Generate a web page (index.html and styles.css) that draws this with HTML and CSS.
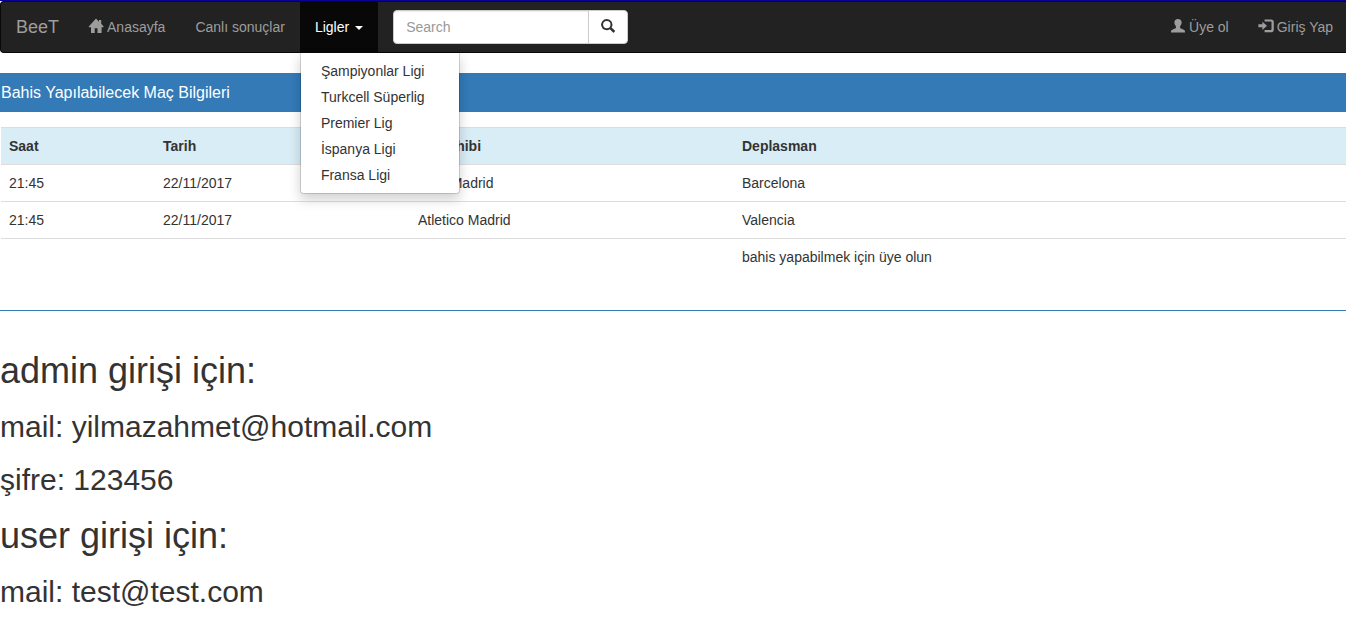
FILE: index.html
```html
<!DOCTYPE html>
<html lang="tr">
<head>
<meta charset="utf-8">
<title>BeeT</title>
<link rel="stylesheet" href="styles.css">
</head>
<body>
<nav class="navbar">
  <a class="brand" href="#">BeeT</a>
  <ul class="nav">
    <li><a class="nav-link" href="#"><svg class="icon" viewBox="0 0 14 14" aria-hidden="true"><path d="M7 -0.4 10 2.7V1H12.2V4.8L14.6 7.4V8.2H12.6V14H8.5V9.3H5.7V14H2V8.2H-.2V7.4Z"/></svg>Anasayfa</a></li>
    <li><a class="nav-link" href="#">Canlı sonuçlar</a></li>
    <li class="dropdown">
      <button class="nav-link dropdown-toggle" type="button" aria-expanded="true">Ligler<span class="caret"></span></button>
      <ul class="dropdown-menu">
        <li><a href="#">Şampiyonlar Ligi</a></li>
        <li><a href="#">Turkcell Süperlig</a></li>
        <li><a href="#">Premier Lig</a></li>
        <li><a href="#">İspanya Ligi</a></li>
        <li><a href="#">Fransa Ligi</a></li>
      </ul>
    </li>
  </ul>
  <form class="search">
    <input class="search-input" type="text" placeholder="Search" aria-label="Search">
    <button class="search-button" type="button" aria-label="Ara"><svg class="icon" viewBox="0 0 14 14" aria-hidden="true"><path fill-rule="evenodd" d="M5.8 0a5.6 5.6 0 0 1 4.8 8.5l3.2 3.1c.3.3.3.6 0 .9l-.9.9c-.3.3-.6.3-.9 0L8.8 10.3A5.6 5.6 0 1 1 5.8 0ZM5.8 1.9a3.7 3.7 0 1 0 0 7.4a3.7 3.7 0 1 0 0-7.4Z"/></svg></button>
  </form>
  <ul class="nav nav-right">
    <li><a class="nav-link" href="#"><svg class="icon" viewBox="0 0 14 14" aria-hidden="true"><path d="M7 0C9.3 0 10.6 1.3 10.6 3.3C10.6 5 10 6.2 9.1 7.2V8.9C9.4 9.6 13 10.4 13.6 11.3C13.9 11.8 14 12.6 14 13.6H0C0 12.6.1 11.8 .4 11.3C1 10.4 4.6 9.6 4.9 8.9V7.2C4 6.2 3.4 5 3.4 3.3C3.4 1.3 4.7 0 7 0Z"/></svg>Üye ol</a></li>
    <li><a class="nav-link" href="#"><svg class="icon" viewBox="0 0 14 14" aria-hidden="true"><path d="M-.6 5.3H3.4V2.7L8 6.8 3.4 10.9V8.3H-.6ZM5.6 .4H12Q14.8 .4 14.8 3.2V10.4Q14.8 13.2 12 13.2H5.6V11H11.8Q12.5 11 12.5 10.3V3.3Q12.5 2.6 11.8 2.6H5.6Z"/></svg>Giriş Yap</a></li>
  </ul>
</nav>
<main>
  <section class="panel">
    <h3 class="panel-heading">Bahis Yapılabilecek Maç Bilgileri</h3>
    <div class="panel-body">
      <table class="matches">
        <colgroup><col class="col-time"><col class="col-date"><col class="col-home"><col></colgroup>
        <thead>
          <tr><th>Saat</th><th>Tarih</th><th>Ev Sahibi</th><th>Deplasman</th></tr>
        </thead>
        <tbody>
          <tr><td>21:45</td><td>22/11/2017</td><td>Real Madrid</td><td>Barcelona</td></tr>
          <tr><td>21:45</td><td>22/11/2017</td><td>Atletico Madrid</td><td>Valencia</td></tr>
          <tr><td></td><td></td><td></td><td>bahis yapabilmek için üye olun</td></tr>
        </tbody>
      </table>
    </div>
  </section>
  <section class="accounts">
    <h1>admin girişi için:</h1>
    <h2>mail: yilmazahmet@hotmail.com</h2>
    <h2>şifre: 123456</h2>
    <h1>user girişi için:</h1>
    <h2>mail: test@test.com</h2>
  </section>
</main>
</body>
</html>
```
FILE: styles.css
```css
* { box-sizing: border-box; }
body {
  margin: 0;
  border-top: 1px solid #0a0096;
  background: #fff;
  color: #333;
  font-family: "Liberation Sans", Arial, sans-serif;
  font-size: 14px;
  line-height: 20px;
}
ul { list-style: none; margin: 0; padding: 0; }
a { text-decoration: none; }
button, input { font: inherit; }

.navbar {
  display: flex;
  align-items: flex-start;
  margin-bottom: 20px;
  border: 1px solid #080808;
  border-right: 0;
  border-radius: 4px 0 0 4px;
  background: #222;
}
.brand { padding: 15px; color: #9d9d9d; font-size: 18px; }
.nav { display: flex; }
.nav-right { margin-left: auto; margin-right: -2px; }
.nav-link {
  display: flex;
  align-items: center;
  gap: 4px;
  padding: 15px;
  border: 0;
  background: transparent;
  color: #9d9d9d;
  line-height: 20px;
}
.icon { width: 14px; height: 14px; fill: currentColor; overflow: visible; }
.nav-link .icon { margin-bottom: 2px; }
.dropdown { position: relative; }
.dropdown-toggle { gap: 6px; background: #080808; color: #fff; }
.caret {
  border-top: 4px solid currentColor;
  border-left: 4px solid transparent;
  border-right: 4px solid transparent;
  margin-top: 2px;
}
.dropdown-menu {
  position: absolute;
  top: 100%;
  left: 0;
  z-index: 10;
  min-width: 160px;
  padding: 5px 0;
  border: 1px solid rgba(0, 0, 0, .15);
  border-radius: 0 0 4px 4px;
  background: #fff;
  background-clip: padding-box;
  box-shadow: 0 6px 12px rgba(0, 0, 0, .175);
}
.dropdown-menu a { display: block; padding: 3px 20px; color: #333; white-space: nowrap; }

.search { display: flex; margin: 8px 15px; }
.search-input {
  width: 196px;
  height: 34px;
  padding: 6px 12px;
  border: 1px solid #ccc;
  border-radius: 4px 0 0 4px;
  background: #fff;
  color: #555;
  box-shadow: inset 0 1px 1px rgba(0, 0, 0, .075);
}
.search-input::placeholder { color: #999; opacity: 1; }
.search-button {
  display: flex;
  height: 34px;
  margin-left: -1px;
  padding: 8px 12px;
  border: 1px solid #ccc;
  border-radius: 0 4px 4px 0;
  background: #fff;
  color: #333;
}

.panel { margin-bottom: 20px; border-bottom: 1px solid #337ab7; }
.panel-heading {
  margin: 0;
  padding: 11px 1px 10px;
  background: #337ab7;
  color: #fff;
  font-size: 16px;
  font-weight: 400;
  line-height: 18px;
}
.panel-body { padding: 15px 0 14px 1px; }
.matches { width: 100%; margin-bottom: 20px; border-collapse: collapse; }
.matches th, .matches td {
  height: 37px;
  padding: 8px;
  border-top: 1px solid #ddd;
  text-align: left;
  vertical-align: top;
}
.matches th { background: #d9edf7; }
.col-time { width: 154px; }
.col-date { width: 255px; }
.col-home { width: 324px; }

.accounts { display: flow-root; }
.accounts h1, .accounts h2 { margin: 20px 0 0; font-weight: 500; }
.accounts h1 { font-size: 36px; line-height: 39px; }
.accounts h2 { font-size: 30px; line-height: 33px; }
```
